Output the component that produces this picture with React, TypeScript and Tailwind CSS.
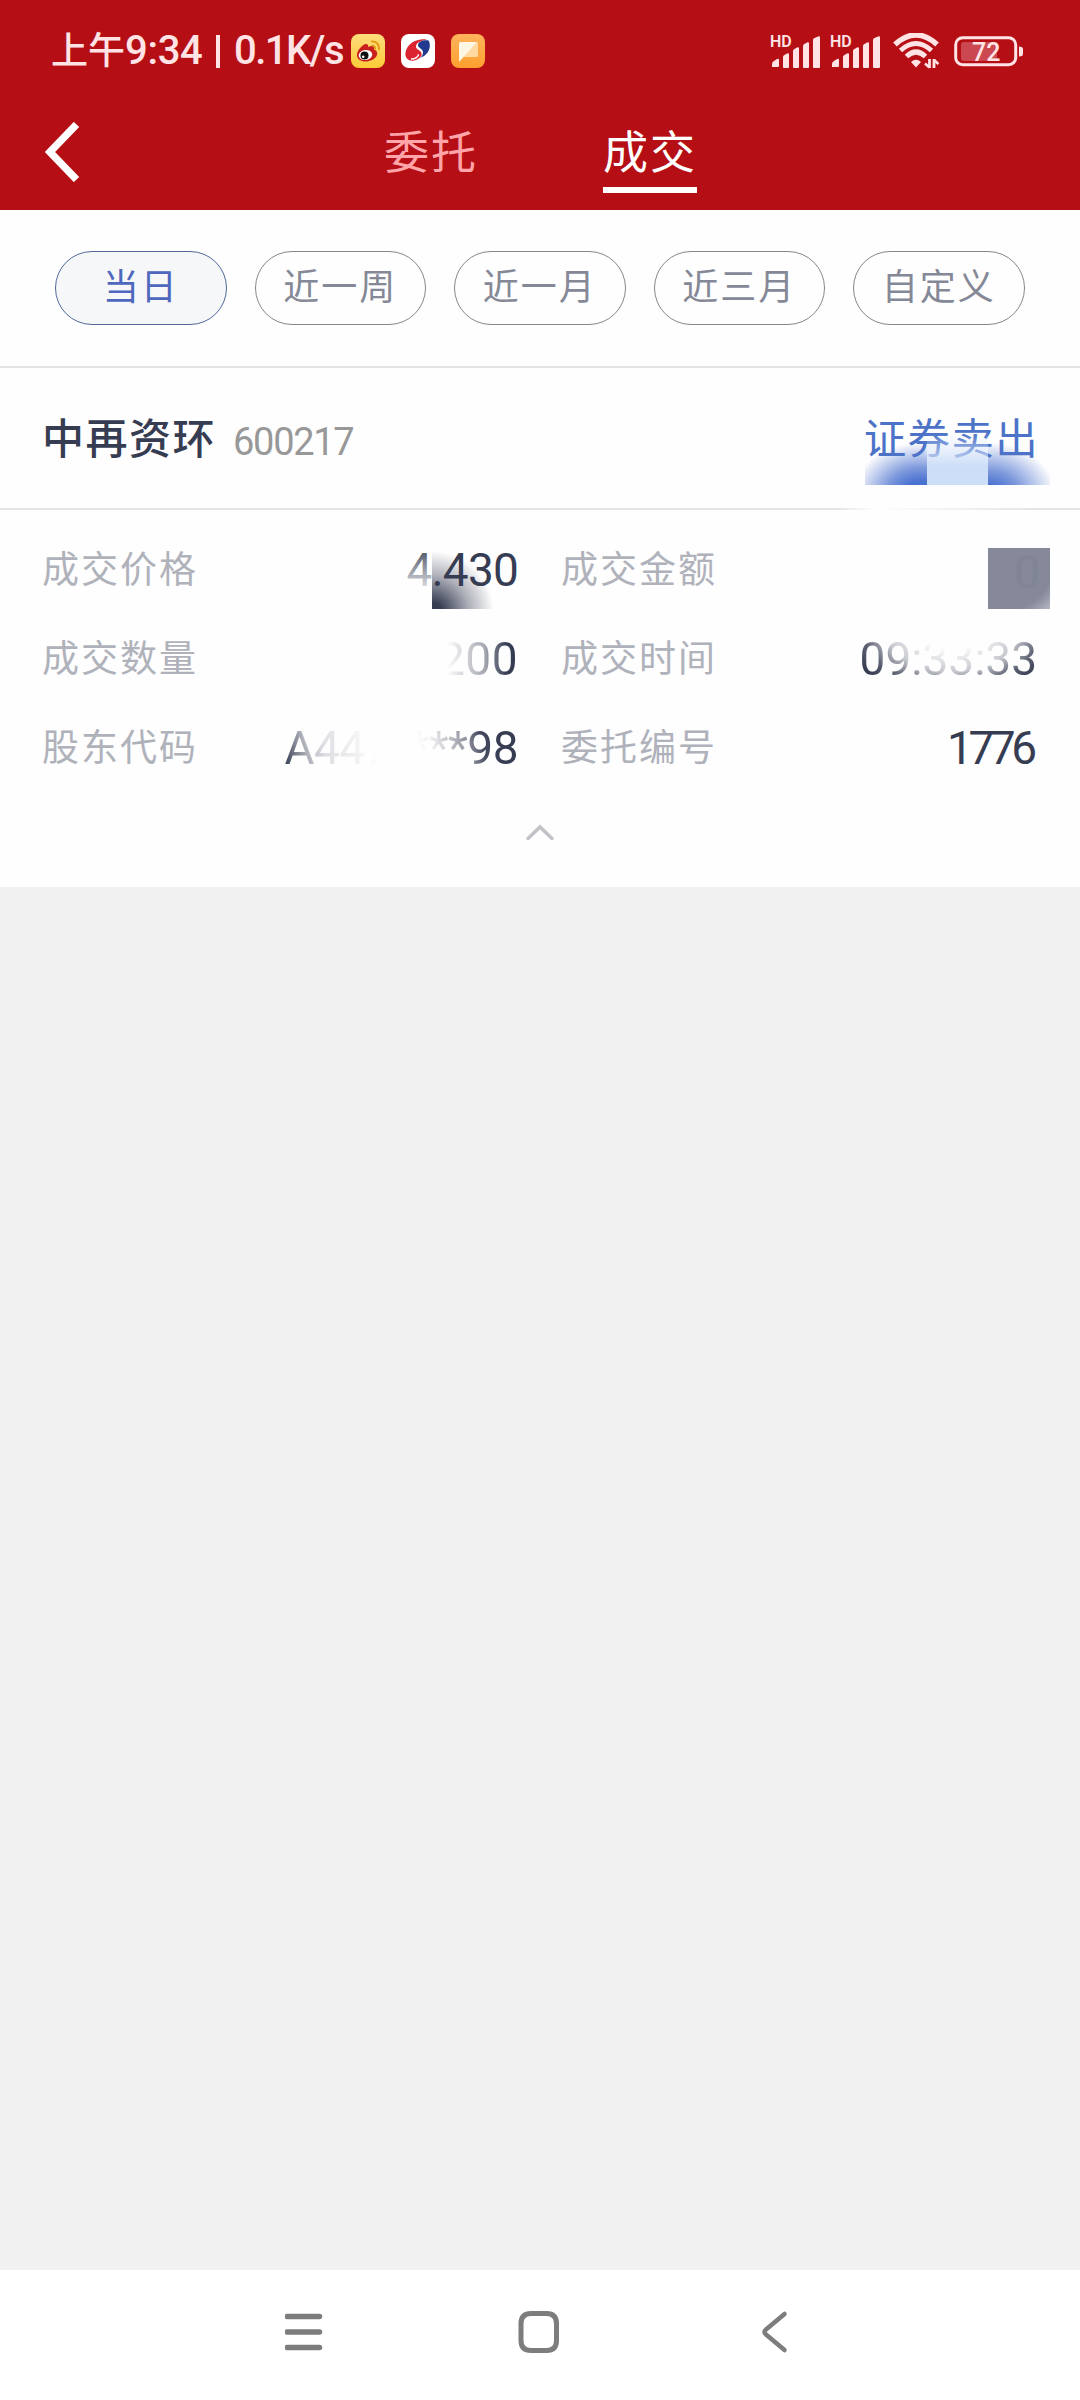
import { clsx } from 'clsx';

const RANGES = ['当日', '近一周', '近一月', '近三月', '自定义'];

function SignalIcon() {
  return (
    <div className="relative h-[33px] w-[50px]">
      <span className="absolute -top-[1px] left-0 text-[16px] leading-[16px] font-semibold">HD</span>
      <svg width="50" height="33" viewBox="0 0 50 33" fill="#ffe3e5">
        <path d="M2 32v-3q0-2 2-3l3-2q2-1 2 1v6q0 1-1 1z" />
        <path d="M13 32V22q0-1 1-1.800l3-1.700q2-1 2 1v12.500q0 1-1 1h-4q-1 0-1-1z" />
        <path d="M23 32V16q0-1 1-1.800l3-1.700q2-1 2 1v18.500q0 1-1 1h-4q-1 0-1-1z" />
        <path d="M33 32V11q0-1 1-1.800l3-1.700q2-1 2 1v23.500q0 1-1 1h-4q-1 0-1-1z" />
        <path d="M43 32V5q0-1 1-1.800l4-1.700q2-1 2 1v29.500q0 1-1 1h-5q-1 0-1-1z" />
      </svg>
    </div>
  );
}

function WifiIcon() {
  return (
    <svg width="46" height="36" viewBox="0 0 46 36" fill="none" stroke="#ffe3e5">
      <path d="M2 11.500Q23-7.500 44 11.500" strokeWidth="5.500" />
      <path d="M7.500 17.500Q23 3.500 38.500 17.500" strokeWidth="5" />
      <path d="M13.500 23.500Q23 14.500 32.500 23.500" strokeWidth="5" />
      <path d="M18 29q5-4.500 10 0l-5 5.500z" fill="#ffe3e5" stroke="none" />
      <path d="M36.500 26V35M41 26V35" strokeWidth="2.800" />
      <path d="M32 30.500l4.500 4M41 27l4.500 4" strokeWidth="2.600" />
    </svg>
  );
}

function BatteryIcon() {
  return (
    <svg width="70" height="31" viewBox="0 0 70 31">
      <rect x="1.700" y="1.700" width="60" height="27" rx="7" fill="none" stroke="#ffe3e5" strokeWidth="3" />
      <path d="M10 6h33v19H10q-3 0-3-3V9q0-3 3-3z" fill="#cb4850" />
      <path d="M65 10.500q4 0 4 2.500v5q0 2.500-4 2.500z" fill="#ffe3e5" />
      <text x="18" y="24.500" fontSize="25" fontWeight="500" fontFamily="Roboto, sans-serif" fill="#ffe3e5">
        72
      </text>
    </svg>
  );
}

function WeiboIcon() {
  return (
    <svg width="34" height="34" viewBox="0 0 34 34">
      <defs>
        <linearGradient id="weibo" x1="0" y1="0" x2="0" y2="1">
          <stop offset="0" stopColor="#fddc7c" />
          <stop offset="1" stopColor="#fdcb38" />
        </linearGradient>
      </defs>
      <rect width="34" height="34" rx="8" fill="url(#weibo)" />
      <path
        d="M6 21c0-5 6-11 9-11 2 0 2.500 1.500 2 3 4-1.800 7-1 6 2.500 7 2.500 2 12-8.500 12C9.500 27.500 6 25 6 21z"
        fill="#c9201f"
      />
      <ellipse cx="14.500" cy="21" rx="6.800" ry="5" fill="#fff" transform="rotate(-8 14.500 21)" />
      <circle cx="13.500" cy="21.500" r="4" fill="#111" />
      <circle cx="12.200" cy="22.800" r="1.300" fill="#fff" />
      <path d="M20 7.500q8.500-.5 8 8.500M20.500 11.500q4-.2 3.800 4" fill="none" stroke="#e39a12" strokeWidth="1.700" />
    </svg>
  );
}

function BrokerIcon() {
  return (
    <svg width="34" height="34" viewBox="0 0 34 34">
      <rect width="34" height="34" rx="8" fill="#fff" />
      <path
        d="M26 5.500C16 4 6 9.500 4.500 18.500c-1 7 5 9.500 10.500 7.500 4.500-1.600 7-5 5-8-1.500-2.200-5-2.500-5-5.500 0-3.500 4.500-6 11-7z"
        fill="#dc2330"
      />
      <path
        d="M27.500 6.500c-6-.8-10.500 1.500-10.500 4.700 0 2.800 5 3.300 5 7.300 0 2.500-1.500 4.300-3 5.500 6-2 10-7.500 9.800-12.500 0-2-.3-3.700-1.300-5z"
        fill="#213a8f"
      />
      <path d="M10 25c4.500 0 7.500-2.200 7.500-4.800" fill="none" stroke="#fff" strokeWidth="1.500" />
    </svg>
  );
}

function NoteIcon() {
  return (
    <svg width="34" height="34" viewBox="0 0 34 34">
      <defs>
        <linearGradient id="note" x1="0" y1="0" x2="0" y2="1">
          <stop offset="0" stopColor="#ffb35c" />
          <stop offset="1" stopColor="#ffa02f" />
        </linearGradient>
      </defs>
      <rect width="34" height="34" rx="8" fill="url(#note)" />
      <path d="M9 8h16q2 0 2 2v11.500q0 1.500-1.500 1.500H13z" fill="#ffd9a0" />
      <path d="M8 9.500Q8 8 9.500 8H26L8 28z" fill="#fff6e4" />
    </svg>
  );
}

function StatusBar() {
  return (
    <div className="flex h-[102px] items-center pr-[56px] pl-[51px] text-[#ffe3e5]">
      <span className="text-[37px] leading-none font-medium">上午</span>
      <span className="w-[77px] text-[40px] leading-none font-medium tracking-[-0.300px]">9:34</span>
      <span className="mr-[14px] ml-[14px] h-[33px] w-[4px] bg-[#ffe3e5]" />
      <span className="w-[117px] text-[40px] leading-none font-medium tracking-[-1.500px]">0.1K/s</span>
      <div className="flex gap-4">
        <WeiboIcon />
        <BrokerIcon />
        <NoteIcon />
      </div>
      <div className="ml-auto flex items-center">
        <SignalIcon />
        <div className="w-[10px]" />
        <SignalIcon />
        <div className="w-[13px]" />
        <WifiIcon />
        <div className="w-[15px]" />
        <BatteryIcon />
      </div>
    </div>
  );
}

function Header() {
  return (
    <header className="h-[210px] bg-[#b50f15]">
      <StatusBar />
      <div className="flex h-[108px] items-start">
        <svg width="36" height="60" viewBox="0 0 36 60" className="mt-[20px] ml-[45px]">
          <path d="M31.500 2.500L5 30l26.500 27.500" fill="none" stroke="#fff" strokeWidth="7.500" />
        </svg>
        <div className="ml-[303px] flex h-[91px] gap-[125px] text-[45px] leading-[103px] tracking-[2px]">
          <span className="w-[94px] text-[#ffa5a9]">委托</span>
          <span className="h-[91px] w-[94px] border-b-[6px] border-white text-white">成交</span>
        </div>
      </div>
    </header>
  );
}

function Label({ children }: { children: string }) {
  return <span className="text-[37px] tracking-[2px] text-[#b0b2bb]">{children}</span>;
}

export default function App() {
  return (
    <div className="flex h-[2400px] w-[1080px] flex-col overflow-hidden bg-[#f1f1f1] font-['Roboto','Noto_Sans_CJK_SC',sans-serif]">
      <Header />

      <main className="h-[677px] bg-[#fefefe]">
        <div className="flex h-[158px] gap-[28px] border-b-2 border-[#e4e4e6] pt-[41px] pl-[55px]">
          {RANGES.map((range, i) => (
            <button
              key={range}
              type="button"
              className={clsx(
                'h-[74px] w-[171.500px] rounded-full border text-[36px] leading-[72px] tracking-[2px]',
                i === 0 ? 'border-[#52699a] bg-[#f6f7f9] text-[#4f68bd]' : 'border-[#85878c] text-[#858997]',
              )}
            >
              {range}
            </button>
          ))}
        </div>

        <div className="relative isolate flex h-[142px] items-center border-b-2 border-[#e4e4e6] pr-[41px] pl-[42px]">
          <span className="mt-[4px] text-[42px] leading-[60px] font-medium tracking-[1.500px] text-[#363c52]">中再资环</span>
          <span className="mt-[7px] ml-[17px] text-[38px] leading-[60px] tracking-[-1.300px] text-[#989898]">600217</span>
          <span className="mt-[4px] ml-auto text-[42.500px] leading-[60px] tracking-[1.300px] text-[#4c73c8]">证券卖出</span>
          {/* smudge tiles over the trade direction */}
          <div className="absolute top-[56px] left-[865px] -z-10 flex">
            <div className="h-[61px] w-[62px] bg-[radial-gradient(ellipse_110%_85%_at_90%_115%,#4a72d0_25%,#7c98dc_50%,#7c98dc00_100%)]" />
            <div className="h-[61px] w-[61px]" />
            <div className="h-[61px] w-[62px] bg-[radial-gradient(ellipse_110%_85%_at_0%_115%,#4a72d0_18%,#7c98dc_45%,#7c98dc00_100%)]" />
          </div>
          <div className="absolute top-[56px] left-[927px] h-[61px] w-[61px] bg-linear-to-t from-[#cddef8] from-30% via-[#d6e4fa77] via-60% to-[#d6e4fa00] to-85%" />
          <div className="absolute -bottom-[2px] left-[835px] h-[2px] w-[205px] bg-linear-to-r from-transparent via-[#fefefe] via-20% to-transparent" />
        </div>

        <div className="grid grid-cols-[476px_476px] gap-x-[43px] pt-[16px] pl-[42px] leading-[89px]">
          <div className="relative flex justify-between">
            <Label>成交价格</Label>
            <div className="absolute top-[22px] right-[24px] h-[61px] w-[62px] bg-[radial-gradient(ellipse_100%_100%_at_0%_105%,#363c52_15%,#363c5266_60%,#363c5200_100%)]" />
            <span className="relative text-[46px] tracking-[-0.800px] text-[#363c52]">4.430</span>
            <div className="absolute top-[22px] right-[86px] h-[61px] w-[61px] bg-linear-to-b from-[#fefefe33] from-10% to-[#fefefe] to-80%" />
          </div>
          <div className="relative flex justify-between">
            <Label>成交金额</Label>
            <div className="absolute top-[22px] -right-[13px] h-[61px] w-[62px] bg-[radial-gradient(ellipse_at_20%_30%,#858999_75%,#b5b7c2_100%)] pl-[26px] text-[46px] leading-[48px] text-[#808494]">
              0
            </div>
          </div>
          <div className="relative flex justify-between">
            <Label>成交数量</Label>
            <span className="bg-linear-to-r from-[#fefefe] from-10% via-[#a5a8b1] via-58% to-[#363c52] to-85% bg-clip-text text-[46px] tracking-[0.500px] text-transparent">
              200
            </span>
          </div>
          <div className="relative flex justify-between">
            <Label>成交时间</Label>
            <span className="bg-[radial-gradient(ellipse_50%_60%_at_52%_20%,#fefefe_30%,#c8cad0_72%,#5a5f70_100%,#363c52_120%)] bg-clip-text text-[46px] text-transparent">
              09:33:33
            </span>
          </div>
          <div className="relative flex justify-between">
            <Label>股东代码</Label>
            <span className="bg-[linear-gradient(75deg,#4a5064_5%,#b0b2bb_13%,#dedfe3_20%,#f0f0f2_32%,#fefefe_40%,#fefefe_57%,#ececee_63%,#c4c6cc_69%,#8f929e_76%,#454a5f_82%,#363c52_88%)] bg-clip-text text-[46px] tracking-[-0.500px] text-transparent">
              A447****98
            </span>
          </div>
          <div className="relative flex justify-between">
            <Label>委托编号</Label>
            <span className="text-[46px] tracking-[-4.500px] text-[#363c52]">
              177<span className="tracking-normal">6</span>
            </span>
          </div>
        </div>

        <div className="flex justify-center pt-[30px]">
          <svg width="30" height="18" viewBox="0 0 30 18">
            <path d="M3 15.500L15 4l12 11.500" fill="none" stroke="#c2c3c8" strokeWidth="3.500" strokeLinecap="round" />
          </svg>
        </div>
      </main>

      <nav className="mt-auto flex h-[130px] items-start justify-center bg-white pt-[40px]">
        <svg width="510" height="44" viewBox="0 0 510 44" fill="none" stroke="#7d7d7d" strokeLinecap="round">
          <path d="M2 6.500H34.500M2 22H34.500M2 37.500H34.500" strokeWidth="5.500" />
          <path
            d="M246 3.500h15.500q10 0 10 10v17q0 10-10 10h-15.500q-10 0-10-10v-17q0-10 10-10z"
            strokeWidth="5"
          />
          <path d="M499.500 4l-18.500 15.500q-3 2.500 0 5L499.500 40" strokeWidth="4.500" />
        </svg>
      </nav>
    </div>
  );
}
